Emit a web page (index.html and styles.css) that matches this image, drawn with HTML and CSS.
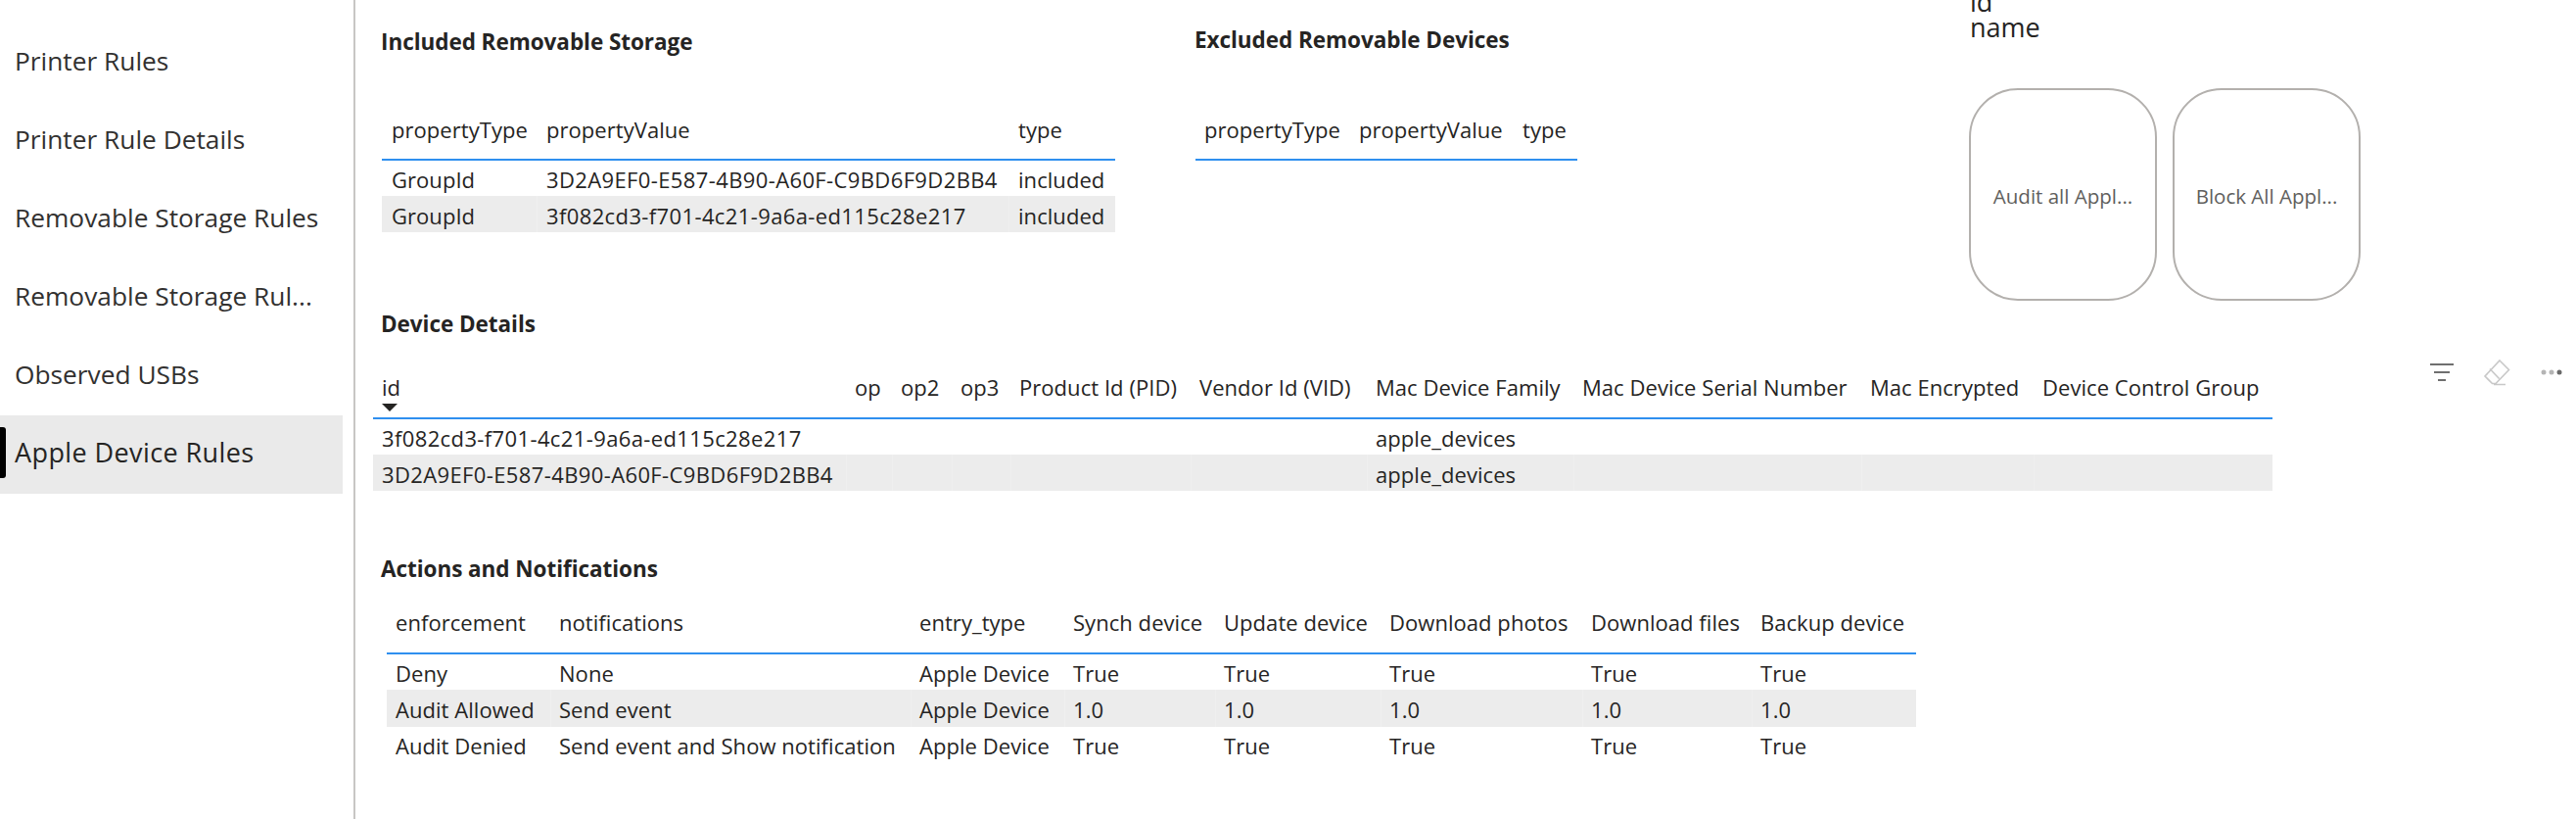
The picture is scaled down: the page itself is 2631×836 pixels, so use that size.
FILE: index.html
```html
<!DOCTYPE html>
<html lang="en">
<head>
<meta charset="utf-8">
<title>Apple Device Rules</title>
<link rel="stylesheet" href="styles.css">
</head>
<body>
<div class="page">
  <nav class="nav">
    <a class="nav-item">Printer Rules</a>
    <a class="nav-item">Printer Rule Details</a>
    <a class="nav-item">Removable Storage Rules</a>
    <a class="nav-item">Removable Storage Rul...</a>
    <a class="nav-item">Observed USBs</a>
    <a class="nav-item nav-active">Apple Device Rules</a>
  </nav>
  <main class="main">
    <div class="top-row">
      <section class="included">
        <h2 class="title title-included">Included Removable Storage</h2>
        <table class="grid grid-included">
          <colgroup><col class="w158"><col class="w482"><col class="w109"></colgroup>
          <thead><tr><th>propertyType</th><th>propertyValue</th><th>type</th></tr></thead>
          <tbody>
            <tr><td>GroupId</td><td class="hex">3D2A9EF0-E587-4B90-A60F-C9BD6F9D2BB4</td><td>included</td></tr>
            <tr class="alt"><td>GroupId</td><td class="hex">3f082cd3-f701-4c21-9a6a-ed115c28e217</td><td>included</td></tr>
          </tbody>
        </table>
      </section>
      <section class="excluded">
        <h2 class="title title-excluded">Excluded Removable Devices</h2>
        <table class="grid grid-excluded">
          <colgroup><col class="w158"><col class="w167"><col class="w65"></colgroup>
          <thead><tr><th>propertyType</th><th>propertyValue</th><th>type</th></tr></thead>
        </table>
      </section>
      <section class="slicer">
        <div class="slicer-clip">id</div>
        <div class="slicer-name">name</div>
        <div class="buttons">
          <button class="pill">Audit all Appl...</button>
          <button class="pill">Block All Appl...</button>
        </div>
      </section>
    </div>

    <h2 class="title title-device">Device Details</h2>
    <div class="device-row">
      <table class="grid grid-device">
        <colgroup><col class="w483"><col class="w47"><col class="w61"><col class="w60"><col class="w184"><col class="w180"><col class="w211"><col class="w294"><col class="w176"><col class="w244"></colgroup>
        <thead>
          <tr>
            <th>id<span class="sort"></span></th><th>op</th><th>op2</th><th>op3</th><th>Product Id (PID)</th><th>Vendor Id (VID)</th><th>Mac Device Family</th><th>Mac Device Serial Number</th><th>Mac Encrypted</th><th>Device Control Group</th>
          </tr>
        </thead>
        <tbody>
          <tr><td class="hex">3f082cd3-f701-4c21-9a6a-ed115c28e217</td><td></td><td></td><td></td><td></td><td></td><td>apple_devices</td><td></td><td></td><td></td></tr>
          <tr class="alt"><td class="hex">3D2A9EF0-E587-4B90-A60F-C9BD6F9D2BB4</td><td></td><td></td><td></td><td></td><td></td><td>apple_devices</td><td></td><td></td><td></td></tr>
        </tbody>
      </table>
      <div class="toolbar">
        <svg class="icon-filter" width="24" height="20" viewBox="0 0 24 20"><path d="M0 2h24M4 10h16M8 18h8" stroke="#6f6f6f" stroke-width="2" fill="none"/></svg>
        <svg class="icon-eraser" width="28" height="28" viewBox="0 0 28 28"><path d="M17 2l9.500 9.500-13.500 14-3.500 0-7.500-7.500zM7 10.500l9.500 10M11 26.500h12" stroke="#c8c8c8" stroke-width="1.600" fill="none"/></svg>
        <svg class="icon-more" width="22" height="6" viewBox="0 0 22 6"><circle cx="3" cy="3" r="2.500" fill="#b5b5b5"/><circle cx="11" cy="3" r="2.500" fill="#b5b5b5"/><circle cx="19" cy="3" r="2.500" fill="#6a6a6a"/></svg>
      </div>
    </div>

    <h2 class="title title-actions">Actions and Notifications</h2>
    <table class="grid grid-actions">
      <colgroup><col class="w167"><col class="w368"><col class="w157"><col class="w154"><col class="w169"><col class="w206"><col class="w173"><col class="w168"></colgroup>
      <thead>
        <tr><th>enforcement</th><th>notifications</th><th>entry_type</th><th>Synch device</th><th>Update device</th><th>Download photos</th><th>Download files</th><th>Backup device</th></tr>
      </thead>
      <tbody>
        <tr><td>Deny</td><td>None</td><td>Apple Device</td><td>True</td><td>True</td><td>True</td><td>True</td><td>True</td></tr>
        <tr class="alt"><td>Audit Allowed</td><td>Send event</td><td>Apple Device</td><td>1.0</td><td>1.0</td><td>1.0</td><td>1.0</td><td>1.0</td></tr>
        <tr><td>Audit Denied</td><td>Send event and Show notification</td><td>Apple Device</td><td>True</td><td>True</td><td>True</td><td>True</td><td>True</td></tr>
      </tbody>
    </table>
  </main>
</div>
</body>
</html>
```
FILE: styles.css
```css
* { box-sizing: border-box; }
html, body { margin: 0; height: 100%; background: #fff; }
body { font-family: "Open Sans", "Liberation Sans", sans-serif; color: #252423; overflow: hidden; }

.page { display: flex; height: 836px; }

/* left page navigator */
.nav { width: 363px; flex: none; padding-top: 24px; border-right: 2px solid #c8c6c4; }
.nav-item { position: relative; display: flex; align-items: center; width: 350px; height: 80px; padding: 0 0 5px 15px; font-size: 26.300px; color: #323130; white-space: nowrap; }
.nav-active { background: #eaeaea; color: #252423; font-size: 27px; letter-spacing: 0.4px; }
.nav-active::before { content: ""; position: absolute; left: 0; top: 12px; width: 6px; height: 52px; background: #000; border-radius: 0 3px 3px 0; }

/* report canvas */
.main { flex: 1; min-width: 0; padding-left: 26px; }
.top-row { display: flex; height: 317px; }
.included { width: 831px; flex: none; padding-top: 29px; }
.excluded { width: 792px; flex: none; padding-top: 27px; }
.slicer { flex: 1; height: 307px; }

.title { margin: 0; height: 28px; font-size: 22.500px; line-height: 28px; font-weight: 700; letter-spacing: -0.05px; color: #252423; white-space: nowrap; }
.title-included { margin-bottom: 46px; }
.title-excluded { margin-bottom: 48px; }
.title-device { margin-bottom: 31px; }
.title-actions { margin-top: 66px; }

/* tables */
.grid { table-layout: fixed; border-collapse: separate; border-spacing: 0; width: max-content; font-size: 22px; letter-spacing: 0.05px; }
.grid th { padding: 0 0 0 10px; font-weight: 400; text-align: left; line-height: 28px; white-space: nowrap; border-bottom: 2px solid #2f8fef; vertical-align: top; color: #252423; }
.grid td { padding: 5px 0 0 10px; height: 36px; line-height: 28px; white-space: nowrap; vertical-align: top; color: #252423; }
.grid .hex { letter-spacing: 0.38px; }
.alt td { background: #ececec; height: 37px; padding-top: 6px; box-shadow: inset 1px 0 0 #efefef; }
.alt td:first-child { box-shadow: none; }

.grid-included { margin-left: 1px; }
.grid-included th { height: 61px; padding-top: 15px; }
.grid-excluded { margin-left: 1px; }
.grid-excluded th { height: 61px; padding-top: 15px; padding-left: 9px; }
.grid-device { margin-left: -8px; flex: none; }
.grid-device th { height: 52px; padding-top: 5px; padding-left: 9px; }
.grid-device td { padding-left: 9px; }
.grid-actions { margin-left: 6px; }
.grid-actions th { height: 73px; padding-top: 26px; padding-left: 9px; }
.grid-actions td { padding-left: 9px; }
.grid-actions .alt td { height: 38px; }

.sort { display: block; width: 0; height: 0; margin-top: 3px; border-left: 8px solid transparent; border-right: 8px solid transparent; border-top: 8px solid #252423; }

.w47 { width: 47px; } .w60 { width: 60px; } .w61 { width: 61px; } .w65 { width: 65px; }
.w109 { width: 109px; } .w154 { width: 154px; } .w157 { width: 157px; } .w158 { width: 158px; }
.w167 { width: 167px; } .w168 { width: 168px; } .w169 { width: 169px; }
.w173 { width: 173px; } .w176 { width: 176px; } .w180 { width: 180px; } .w184 { width: 184px; }
.w206 { width: 206px; } .w211 { width: 211px; } .w244 { width: 244px; } .w294 { width: 294px; }
.w368 { width: 368px; } .w482 { width: 482px; } .w483 { width: 483px; }

/* slicer */
.slicer-clip { height: 11px; font-size: 27px; line-height: 4px; color: #252423; }
.slicer-name { height: 79px; padding-top: 3px; font-size: 27px; line-height: 28px; color: #252423; }
.buttons { display: flex; gap: 16px; margin-left: -1px; }
.pill { width: 192px; height: 217px; padding: 2px 0 0; border: 2px solid #b3b0ad; border-radius: 50px; background: #fff; font-family: inherit; font-size: 20.500px; color: #605e5c; white-space: nowrap; }

/* visual header */
.device-row { display: flex; justify-content: space-between; padding-right: 14px; }
.toolbar { display: flex; align-items: center; align-self: flex-start; gap: 31px; margin-top: -10px; }
.icon-filter { display: block; margin-right: -1px; }
.icon-eraser { display: block; }
.icon-more { display: block; }
```
